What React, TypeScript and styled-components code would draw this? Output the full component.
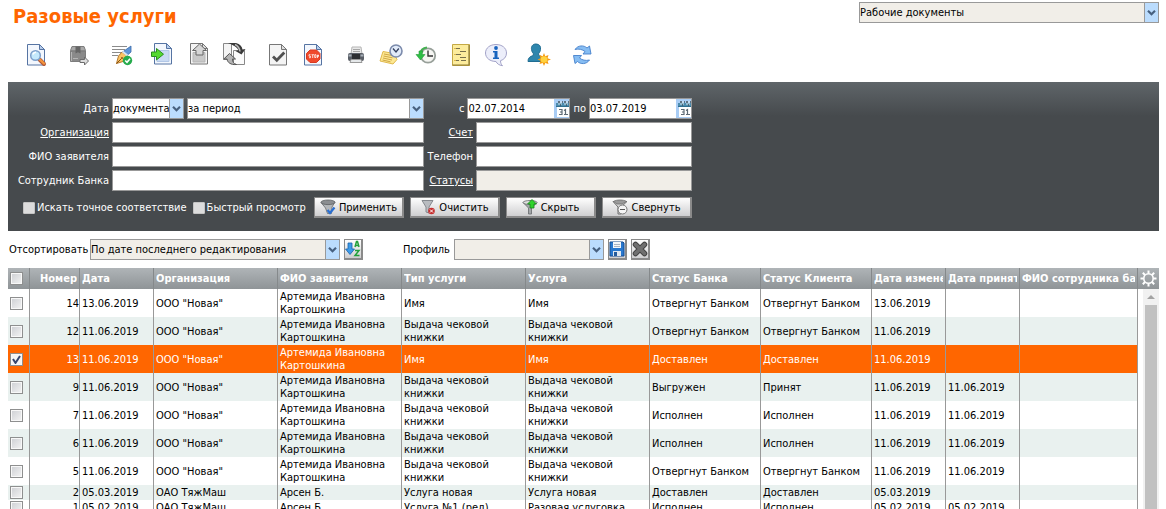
import React, { useState } from 'react';
import styled, { createGlobalStyle, css } from 'styled-components';

const FONT = '"DejaVu Sans Condensed", "DejaVu Sans", Tahoma, sans-serif';

const GlobalStyle = createGlobalStyle`
  *, *::before, *::after { box-sizing: border-box; }
  body { margin: 0; background: #fff; color: #000; font: 11px/13px ${FONT}; }
  button, input, select { font: inherit; color: inherit; margin: 0; padding: 0; }
`;

const Page = styled.div`
  display: flex;
  flex-direction: column;
  height: 100vh;
  overflow: hidden;
  padding: 2px 7px 0 8px;
`;

const Header = styled.header`
  display: flex;
  justify-content: space-between;
  align-items: flex-start;
  flex: none;
  min-height: 41px;
`;

const Title = styled.h1`
  margin: 2px 0 0 5px;
  font-size: 20px;
  line-height: 24px;
  font-weight: bold;
  color: #f60;
`;

/* ---------- form controls ---------- */

const SelectBox = styled.span<{ $width: number; $tinted?: boolean }>`
  display: inline-flex;
  flex: none;
  width: ${p => p.$width}px;
  height: 21px;
  border: 1px solid #999;
  background: ${p => (p.$tinted ? '#f1eee8' : '#fff')};
  color: #000;
`;

const NativeSelect = styled.select`
  appearance: none;
  flex: 1;
  min-width: 0;
  border: 0;
  background: transparent;
  border-radius: 0;
  outline: 0;
`;

const SelectArrow = styled.span`
  display: flex;
  align-items: center;
  justify-content: center;
  flex: none;
  width: 14px;
  border-left: 1px solid #999;
  background: #bbdcfd;
  pointer-events: none;
`;

function Select(props: { label: string; value: string; width: number; tinted?: boolean; id?: string }) {
  return (
    <SelectBox $width={props.width} $tinted={props.tinted}>
      <NativeSelect id={props.id} aria-label={props.label} defaultValue={props.value}>
        <option>{props.value}</option>
      </NativeSelect>
      <SelectArrow>
        <svg width="9" height="6" viewBox="0 0 9 6">
          <path d="M1 .8 4.500 4.200 8 .8" fill="none" stroke="#47607f" strokeWidth="2.200" />
        </svg>
      </SelectArrow>
    </SelectBox>
  );
}

const TextInput = styled.input<{ $tinted?: boolean }>`
  width: 100%;
  min-width: 0;
  height: 21px;
  border: 1px solid #999;
  border-radius: 0;
  padding: 0 1px;
  background: ${p => (p.$tinted ? '#f1eee8' : '#fff')};
  color: #000;
  outline: 0;
`;

const DateBox = styled.span`
  display: flex;
  flex: none;
  width: 103px;
  height: 21px;
  border: 1px solid #999;
  background: #fff;
`;

const DateInput = styled.input`
  flex: 1;
  min-width: 0;
  border: 0;
  background: transparent;
  color: #000;
  outline: 0;
`;

const CalendarButton = styled.button`
  display: flex;
  width: 15px;
  border: 0;
  background: #a9cdf5;
`;

function DateField({ id, value }: { id: string; value: string }) {
  return (
    <DateBox>
      <DateInput id={id} type="text" defaultValue={value} />
      <CalendarButton type="button" aria-label="Календарь">
        <svg width="15" height="19" viewBox="0 0 15 19">
          <path d="M2 4h13v4H2z" fill="#4c8cae" />
          <path d="M3 8h12v10H3z" fill="#fff" />
          <path d="M2 7.500h13" stroke="#2f6f8f" />
          <path d="M5 2v4M7 2v4M11 2v4M13 2v4" stroke="#d9e6ed" />
          <path d="M4 3h2M8 3h1M10 3h2M14 3h1M6 6h1M12 6h1" stroke="#40525e" strokeWidth="1.500" />
          <path d="M5 10.500h3v5H5M6 13h2M10 11.500l1.500-1V16M10 15.500h4" fill="none" stroke="#5d6a74" strokeWidth="1.200" />
        </svg>
      </CalendarButton>
    </DateBox>
  );
}

/* ---------- toolbar ---------- */

const Toolbar = styled.nav`
  display: flex;
  flex: none;
  gap: 19px;
  padding-left: 16px;
  margin-bottom: 15px;
`;

const ToolGroup = styled.div`
  display: flex;
  gap: 11px;
`;

const ToolButton = styled.button`
  width: 24px;
  height: 24px;
  border: 0;
  background: none;
  cursor: pointer;
  svg { display: block; }
`;

function Sheet({ x = 3, y = 1, stroke = '#5674a3', fill = '#f3f7fd', fold = '#b7cdec', w = 18 }) {
  return (
    <>
      <path d={`M${x + 0.5} ${y + 0.5}h${w - 6}l5 5v15.500h-${w - 1}z`} fill={fill} stroke={stroke} />
      <path d={`M${x + w - 5.5} ${y + 0.5}v5h5z`} fill={fold} stroke={stroke} />
    </>
  );
}

const toolIcons: Record<string, React.ReactNode> = {
  'Просмотр': (
    <>
      <Sheet />
      <path d="M15.500 16.500 20 21" stroke="#b0583a" strokeWidth="4" strokeLinecap="round" />
      <path d="M15.800 16.500 20 20.500" stroke="#f5953a" strokeWidth="2.400" strokeLinecap="round" />
      <circle cx="11.500" cy="12.500" r="4.800" fill="#c4e9fc" stroke="#7d9fca" strokeWidth="1.500" />
      <path d="M8.800 11.500q1-2.300 3.200-2.200" stroke="#fff" strokeWidth="1.500" fill="none" />
    </>
  ),
  'Отправить': (
    <>
      <path d="M3.500 7.500 5 3.500h12l1.500 4v11h-15z" fill="#8a8a8a" stroke="#7d7d7d" />
      <path d="M5.500 4h11L18 7.500H4z" fill="#a9a9a9" />
      <path d="M4 8h14" stroke="#777" />
      <path d="M8.500 3.500h5v7l-2.500-1.200-2.500 1.200z" fill="#666" />
      <path d="M4.500 9v9M6 15.500h5" stroke="#b5b5b5" />
      <path d="M13 16.500h4.500v-2.500l4 4-4 4v-2.500H13z" fill="#ddd" stroke="#6c6c6c" />
    </>
  ),
  'Подписать': (
    <>
      <path d="M2 3.500h15M2 6.500h13M2 9.500h10M2 12.500h6" stroke="#8b8b8b" strokeWidth="1.200" />
      <path d="M21 3v6l-4 3.500-4.500-3.500z" fill="#5f95d8" stroke="#3a69a8" strokeWidth=".8" />
      <path d="M12 9l5 3.500-2.500 5.500L6.500 20.500 8.500 13z" fill="#fbc363" stroke="#b5782b" />
      <path d="m6.500 20.500 5-5" stroke="#815016" />
      <circle cx="12" cy="15" r="1" fill="#8c5a1c" />
      <path d="M12.500 8.500l5 4" stroke="#d8e3ef" strokeWidth="2" />
      <circle cx="17.500" cy="17.500" r="4.700" fill="#26ab4c" />
      <path d="m15.200 17.500 1.800 1.800 3-3.500" stroke="#fff" strokeWidth="1.600" fill="none" />
    </>
  ),
  'Импорт': (
    <>
      <Sheet x={1} y={0} />
      <path d="M4 7.500h12v11H4z" fill="#c9daf2" stroke="#b2c7e6" />
      <path d="M-1.500 9h5V5.500l7 5.700-7 5.700V13.500h-5z" fill="#55d930" stroke="#2b8f1f" />
    </>
  ),
  'Экспорт': (
    <>
      <Sheet x={2} y={0} stroke="#777" fill="#f4f4f4" fold="#ddd" />
      <path d="M5 9.500h12v9.500H5z" fill="#c8c8c8" stroke="#b5b5b5" />
      <path d="m11.500 1 7 6.500H15V12H8V7.500H4.500z" fill="#d6d6d6" stroke="#666" />
    </>
  ),
  'Обмен': (
    <>
      <path d="M.5.500h8v16h-8z" fill="#f4f4f4" stroke="#888" />
      <path d="M10.500 7.500h11v14h-11z" fill="#fbfbfb" stroke="#888" />
      <path d="M5 0h8c4 1 6 3.500 6.500 6.500l3-.5-4 5.500-6-3.500 3-.7C14.500 4.500 10 2 5 0z" fill="#3a3a3a" />
      <path d="M12 1.500c3 1.500 4.500 4 5 7" stroke="#bbb" strokeWidth="1.500" fill="none" />
      <path d="m6.500 10.500 6 5.500H9.500c0 3 1 4.500 4 5.500-6 .5-9-2-9.500-5.500H.8z" fill="#b4b4b4" stroke="#555" />
    </>
  ),
  'Проверить': (
    <>
      <Sheet stroke="#777" fill="#f4f4f4" fold="#ddd" />
      <path d="m7 13.500 3.800 3.800 7.500-7.800" stroke="#505050" strokeWidth="2.800" fill="none" />
    </>
  ),
  'Остановить': (
    <>
      <Sheet />
      <path d="M9 7h6.500L19 10.500V16l-3.500 3.500H9L5.500 16v-5.500z" fill="#f04a2c" stroke="#d93a22" />
      <path d="M9.500 11.700H8v1.500h1.500v1.500H8M10.500 11.700h2.500M11.700 12v3M13.700 11.700h1.300v2.800h-1.300zM16.500 15v-3h1v1.500h-1" stroke="#fff" strokeWidth=".8" fill="none" />
    </>
  ),
  'Печать': (
    <>
      <path d="M8 4h9l1 7H7z" fill="#e8e8e8" stroke="#b5b5b5" />
      <path d="M9 6.500h7M9 8.500h7" stroke="#a5a5a5" />
      <rect x="4" y="10" width="16" height="8" rx="2" fill="#595e66" />
      <path d="M4.500 12.500h3M16.500 12.500h3" stroke="#a8afb8" strokeWidth="2" />
      <path d="M8 11h8v5H8z" fill="#2c2e31" />
      <path d="M7 16.500h10l1 3H6z" fill="#e5e8ea" stroke="#999" />
    </>
  ),
  'Напоминание': (
    <>
      <path d="m4 8.500 11 2 3 6-4 4.500-13-3z" fill="#fde892" stroke="#e0b94e" />
      <path d="m5 11 9 1.700M4.500 13l9 1.800M4 15l9 2M3.500 17l8 1.800" stroke="#cfa748" />
      <circle cx="17" cy="8" r="6" fill="#e2ebf9" stroke="#7c8bac" strokeWidth="1.600" />
      <path d="m14 5.500 3 3.500 2.800-3.500" stroke="#34405f" strokeWidth="1.300" fill="none" />
    </>
  ),
  'История': (
    <>
      <circle cx="14" cy="12.500" r="7.200" fill="#f6f6f3" stroke="#98a09a" strokeWidth="1.800" />
      <path d="M14 7.500v5.500h5" stroke="#333" strokeWidth="1.400" fill="none" />
      <path d="M6 11c.5-3.500 3-6 7-6.500" stroke="#45b052" strokeWidth="2" fill="none" />
      <path d="M5 8v3.500H2L6.500 17l4.500-5.500H8L9 8z" fill="#2fbf45" stroke="#289a3a" strokeWidth=".6" />
    </>
  ),
  'Документ': (
    <>
      <path d="M3.500 1.500h17v21h-17z" fill="#fcec9c" stroke="#c4a945" />
      <path d="M20 2v20.500M3.500 22h17" stroke="#8c7a35" strokeWidth="1.200" />
      <path d="M7 5.500h4M11 8.500h6M7 11.500h5M11 14.500h6M7 17.500h3M12 17.500h5" stroke="#77704c" strokeWidth="1.200" />
      <path d="M5 5.500h2M5 11.500h2M5 17.500h2" stroke="#dcb64a" strokeWidth="1.200" />
    </>
  ),
  'Информация': (
    <>
      <path d="M12 1.500c6 0 10.500 3.500 10.500 8.500 0 4-2.500 6.500-6 7.700 0 2 .5 3.500 2 5-3.500-.5-5.500-2-6.500-4.200-6 0-10.500-3.500-10.500-8.500S6 1.500 12 1.500z" fill="#eceefa" stroke="#a3a3c8" />
      <circle cx="12" cy="5" r="1.900" fill="#1763be" />
      <path d="M9 8h4.500v6.500H15V16H9v-1.500h1.500v-5H9z" fill="#1763be" />
    </>
  ),
  'Клиент': (
    <>
      <path d="M9 1c3.500 0 5 2.500 4.500 5.500-.3 2-1 3-1.800 4v2c3.500 1 5.300 2.500 5.300 6H1c0-3.500 1.800-5 5.300-6v-2C5.500 9.500 4.800 8.500 4.500 6.500 4 3.500 5.500 1 9 1z" fill="#2e86ad" stroke="#206d92" />
      <path d="m17 10 1.300 3.200L21.500 12l-1 3.200 3.500 1.300-3.500 1.300 1 3.200-3.200-1L17 23l-1.300-3-3.200 1 1-3.200-3-1.300 3-1.300-1-3.200 3.200 1.200z" fill="#f59b14" />
      <circle cx="17" cy="16.500" r="3.300" fill="#ffd23e" />
    </>
  ),
  'Обновить': (
    <>
      <path d="M5 6.500C8 2 14 2 17 5l2.500-2 1.500 8h-8l2-2.500C12.500 6.500 9 5.500 5 6.500z" fill="#86bdf3" stroke="#4580cb" strokeWidth=".9" />
      <path d="M19.500 17C16.500 21.500 10.500 21.500 7.500 18.500L5 20.500 3.500 12.500h8l-2 2.500c2.500 2 6 3 10 2z" fill="#86bdf3" stroke="#4580cb" strokeWidth=".9" />
    </>
  ),
};

const toolGroups = [
  ['Просмотр'],
  ['Отправить'],
  ['Подписать'],
  ['Импорт', 'Экспорт', 'Обмен'],
  ['Проверить', 'Остановить'],
  ['Печать', 'Напоминание', 'История', 'Документ', 'Информация'],
  ['Клиент'],
  ['Обновить'],
];

/* ---------- filter panel ---------- */

const FilterPanel = styled.form`
  flex: none;
  padding: 16px 0 13px;
  background: linear-gradient(#5f6569, #464a4d 34px);
  color: #fff;
`;

const FilterGrid = styled.div`
  display: grid;
  grid-template-columns: 101px 312px 46px 216px;
  gap: 3px;
  width: max-content;
`;

const labelStyle = css`
  align-self: center;
  justify-self: end;
  color: #fff;
  white-space: nowrap;
`;

const FieldLabel = styled.label`${labelStyle}`;
const FieldLink = styled.a`${labelStyle} text-decoration: underline;`;

const FieldGroup = styled.div`
  display: flex;
  gap: 3px;
`;

const DateRange = styled.div`
  grid-column: span 2;
  display: flex;
  justify-content: flex-end;
  align-items: center;
  gap: 3px;
`;

const ActionRow = styled.div`
  grid-column: 1 / -1;
  display: flex;
  align-items: center;
  margin-top: 3px;
  padding-left: 15px;
  gap: 6px;
`;

const CheckLabel = styled.label`
  display: flex;
  align-items: center;
  gap: 2px;
  white-space: nowrap;
`;

const FilterCheck = styled.input`
  appearance: none;
  width: 12px;
  height: 12px;
  border: 1px solid #c4c4c4;
  border-radius: 1px;
  background: #dcdcdc;
`;

const ActionButtons = styled.div`
  display: flex;
  gap: 6px;
  margin-left: auto;
`;

const ActionButton = styled.button`
  display: flex;
  align-items: center;
  justify-content: center;
  gap: 3px;
  width: 90px;
  height: 21px;
  border: 1px solid #8a8a8a;
  border-right-width: 2px;
  border-bottom-width: 2px;
  background: linear-gradient(#fefefe, #cfcfd1);
  color: #000;
  white-space: nowrap;
  svg { flex: none; }
`;

function Funnel() {
  return (
    <>
      <path d="M1 3.500 6.500 9v6h3V9L15 3.500z" fill="#a4a7aa" stroke="#66696c" strokeWidth=".8" />
      <ellipse cx="8" cy="3.500" rx="7" ry="2" fill="#dedede" stroke="#66696c" strokeWidth=".8" />
    </>
  );
}

const actions: { text: string; icon: React.ReactNode }[] = [
  {
    text: 'Применить',
    icon: (
      <>
        <path d="M1 3.500 5.500 9l2 5.500h4L12 8l3-5z" fill="#b4b7ba" stroke="#66696c" strokeWidth=".8" />
        <ellipse cx="8" cy="3.300" rx="7" ry="2.300" fill="#8b8e91" stroke="#5c5f62" strokeWidth=".8" />
        <path d="m7.500 11 2.500 3 4.500-5.500" stroke="#2a6fd2" strokeWidth="2.200" fill="none" />
      </>
    ),
  },
  {
    text: 'Очистить',
    icon: (
      <>
        <path d="M2 1.500h11L9 8v6l-3-1V8z" fill="#b9bcc0" stroke="#85898e" />
        <circle cx="11.500" cy="12" r="3.300" fill="#c62f2f" />
        <path d="m10 10.500 3 3m0-3-3 3" stroke="#fff" />
      </>
    ),
  },
  {
    text: 'Скрыть',
    icon: (
      <>
        <Funnel />
        <path d="m10 .5 4.500 4.500H12v4H8V5H5.500z" fill="#2fd32c" stroke="#16831b" strokeWidth=".8" />
      </>
    ),
  },
  {
    text: 'Свернуть',
    icon: (
      <>
        <path d="M1 2.500 6 8v7h3V8l6-5.500z" fill="#d7d7d7" stroke="#707070" />
        <path d="M1.500 2.500C4 .5 12 .5 14.500 2.500L10 5H5z" fill="#9b9b9b" stroke="#707070" strokeWidth=".8" />
        <circle cx="10.500" cy="10.500" r="4.500" fill="#f4f4f4" stroke="#777" />
        <path d="M8 10.500h5" stroke="#555" />
      </>
    ),
  },
];

/* ---------- sort bar ---------- */

const SortBar = styled.div`
  display: flex;
  flex: none;
  align-items: center;
  gap: 4px;
  padding: 8px 0;
`;

const SortLabel = styled.label<{ $width: number }>`
  width: ${p => p.$width}px;
  padding-left: 1px;
  white-space: nowrap;
`;

const ProfileLabel = styled(SortLabel)`
  margin-left: 35px;
`;

const IconButton = styled.button`
  display: flex;
  align-items: center;
  justify-content: center;
  width: 19px;
  height: 21px;
  border: 1px solid #8a8a8a;
  border-right-width: 2px;
  border-bottom-width: 2px;
  background: linear-gradient(#fefefe, #cfcfd1);
  svg { flex: none; }
`;

/* ---------- documents table ---------- */

const Grid = styled.div`
  display: flex;
  flex: 1;
  min-height: 0;
  align-items: stretch;
`;

const TableArea = styled.div`
  flex: 1;
  min-width: 0;
  overflow: hidden;
`;

const Table = styled.table`
  width: 100%;
  table-layout: fixed;
  border-collapse: separate;
  border-spacing: 0;
`;

const headFill = 'linear-gradient(#afb4b7, #8f9497)';

const Th = styled.th<{ $right?: boolean }>`
  height: 21px;
  padding: 0 2px;
  border-right: 1px solid #85898b;
  background: ${headFill};
  color: #fff;
  font-weight: bold;
  text-align: ${p => (p.$right ? 'right' : 'left')};
`;

const HeadText = styled.div`
  overflow: hidden;
  white-space: nowrap;
`;

const Td = styled.td<{ $right?: boolean }>`
  padding: 1px ${p => (p.$right ? 0 : 2)}px 1px 2px;
  border-right: 1px solid #999;
  text-align: ${p => (p.$right ? 'right' : 'left')};
  vertical-align: middle;
`;

const Row = styled.tr<{ $selected: boolean }>`
  background: #fff;
  &:nth-child(even) { background: #e9f1ef; }
  ${p => p.$selected && css`
    && { background: #f60; color: #fff; }
  `}
`;

const RowCheck = styled.input`
  appearance: none;
  display: block;
  width: 13px;
  height: 13px;
  border: 1px solid #8e8f8f;
  background: linear-gradient(135deg, #cdcfd3, #f4f4f4);
  box-shadow: inset 0 0 0 1px #f8f8f8;
  &:checked {
    background: #f4f4f4 url("data:image/svg+xml,%3Csvg xmlns='http://www.w3.org/2000/svg' viewBox='0 0 11 11'%3E%3Cpath d='M2 5l2.500 4L9 2' fill='none' stroke='%2335456e' stroke-width='2'/%3E%3C/svg%3E") center / 11px 11px no-repeat;
  }
`;

const SideRail = styled.div`
  display: flex;
  flex-direction: column;
  width: 21px;
`;

const SettingsButton = styled.button`
  display: flex;
  align-items: center;
  justify-content: center;
  flex: none;
  height: 21px;
  border: 0;
  background: ${headFill};
`;

const ScrollTrack = styled.div`
  display: flex;
  flex-direction: column;
  align-items: center;
  flex: 1;
  width: 16px;
  margin-left: auto;
  background: #f1f1f1;
`;

const ScrollThumb = styled.div`
  flex: 1;
  width: 12px;
  background: #c1c1c1;
`;

const ScrollUp = styled.svg`
  flex: none;
  margin: 4px 0;
`;

const columns: { title: string; width?: number; right?: boolean }[] = [
  { title: 'Номер', width: 50, right: true },
  { title: 'Дата', width: 74 },
  { title: 'Организация', width: 124 },
  { title: 'ФИО заявителя', width: 124 },
  { title: 'Тип услуги', width: 124 },
  { title: 'Услуга', width: 124 },
  { title: 'Статус Банка', width: 111 },
  { title: 'Статус Клиента', width: 111 },
  { title: 'Дата изменения', width: 74 },
  { title: 'Дата принятия', width: 74 },
  { title: 'ФИО сотрудника банка' },
];

const person = 'Артемида Ивановна Картошкина';
const book = 'Выдача чековой книжки';
const org = 'ООО "Новая"';

const rows: string[][] = [
  ['14', '13.06.2019', org, person, 'Имя', 'Имя', 'Отвергнут Банком', 'Отвергнут Банком', '13.06.2019', '', ''],
  ['12', '11.06.2019', org, person, book, book, 'Отвергнут Банком', 'Отвергнут Банком', '11.06.2019', '', ''],
  ['13', '11.06.2019', org, person, 'Имя', 'Имя', 'Доставлен', 'Доставлен', '11.06.2019', '', ''],
  ['9', '11.06.2019', org, person, book, book, 'Выгружен', 'Принят', '11.06.2019', '11.06.2019', ''],
  ['7', '11.06.2019', org, person, book, book, 'Исполнен', 'Исполнен', '11.06.2019', '11.06.2019', ''],
  ['6', '11.06.2019', org, person, book, book, 'Исполнен', 'Исполнен', '11.06.2019', '11.06.2019', ''],
  ['5', '11.06.2019', org, person, book, book, 'Отвергнут Банком', 'Отвергнут Банком', '11.06.2019', '11.06.2019', ''],
  ['2', '05.03.2019', 'ОАО ТяжМаш', 'Арсен Б.', 'Услуга новая', 'Услуга новая', 'Доставлен', 'Доставлен', '05.03.2019', '', ''],
  ['1', '05.02.2019', 'ОАО ТяжМаш', 'Арсен Б.', 'Услуга №1 (ред)', 'Разовая услуговка', 'Исполнен', 'Исполнен', '05.02.2019', '05.02.2019', ''],
];

export default function App() {
  const [selected, setSelected] = useState<string[]>(['13']);
  const toggle = (id: string) =>
    setSelected(s => (s.includes(id) ? s.filter(x => x !== id) : [...s, id]));

  return (
    <Page>
      <GlobalStyle />
      <Header>
        <Title>Разовые услуги</Title>
        <Select label="Раздел" value="Рабочие документы" width={300} tinted />
      </Header>

      <Toolbar>
        {toolGroups.map(group => (
          <ToolGroup key={group[0]}>
            {group.map(name => (
              <ToolButton key={name} type="button" aria-label={name}>
                <svg width="24" height="24" viewBox="0 0 24 24" overflow="visible">{toolIcons[name]}</svg>
              </ToolButton>
            ))}
          </ToolGroup>
        ))}
      </Toolbar>

      <FilterPanel onSubmit={e => e.preventDefault()}>
        <FilterGrid>
          <FieldLabel htmlFor="dateKind">Дата</FieldLabel>
          <FieldGroup>
            <Select id="dateKind" label="Дата" value="документа" width={72} />
            <Select label="Период" value="за период" width={237} />
          </FieldGroup>
          <DateRange>
            <label htmlFor="from">с</label>
            <DateField id="from" value="02.07.2014" />
            <label htmlFor="to">по</label>
            <DateField id="to" value="03.07.2019" />
          </DateRange>

          <FieldLink href="#org" id="orgLabel">Организация</FieldLink>
          <TextInput type="text" aria-labelledby="orgLabel" />
          <FieldLink href="#account" id="accountLabel">Счет</FieldLink>
          <TextInput type="text" aria-labelledby="accountLabel" />

          <FieldLabel htmlFor="applicant">ФИО заявителя</FieldLabel>
          <TextInput type="text" id="applicant" />
          <FieldLabel htmlFor="phone">Телефон</FieldLabel>
          <TextInput type="text" id="phone" />

          <FieldLabel htmlFor="employee">Сотрудник Банка</FieldLabel>
          <TextInput type="text" id="employee" />
          <FieldLink href="#statuses" id="statusLabel">Статусы</FieldLink>
          <TextInput type="text" aria-labelledby="statusLabel" readOnly $tinted />

          <ActionRow>
            <CheckLabel><FilterCheck type="checkbox" />Искать точное соответствие</CheckLabel>
            <CheckLabel><FilterCheck type="checkbox" />Быстрый просмотр</CheckLabel>
            <ActionButtons>
              {actions.map(a => (
                <ActionButton key={a.text} type="button">
                  <svg width="16" height="16" viewBox="0 0 16 16">{a.icon}</svg>
                  {a.text}
                </ActionButton>
              ))}
            </ActionButtons>
          </ActionRow>
        </FilterGrid>
      </FilterPanel>

      <SortBar>
        <SortLabel htmlFor="sort" $width={78}>Отсортировать</SortLabel>
        <Select id="sort" label="Отсортировать" value="По дате последнего редактирования" width={250} tinted />
        <IconButton type="button" aria-label="Направление сортировки">
          <svg width="16" height="18" viewBox="0 0 16 18">
            <path d="M3 3h4v6h2.500L5 14.500.5 9H3z" fill="#3d9be8" stroke="#1b62ad" strokeWidth=".8" />
            <path d="m10 7 1.500-5.500h1L14 7M10.500 5.500h3M10 10.500h4l-4 5h4.500" fill="none" stroke="#22a03b" strokeWidth="1.500" />
          </svg>
        </IconButton>
        <ProfileLabel htmlFor="profile" $width={48}>Профиль</ProfileLabel>
        <Select id="profile" label="Профиль" value="" width={150} tinted />
        <IconButton type="button" aria-label="Сохранить">
          <svg width="16" height="16" viewBox="0 0 16 16">
            <path d="M1 1h13l1 1v13H1z" fill="#2878cf" stroke="#174d91" />
            <path d="M4 1h8v6H4z" fill="#f3f6fa" />
            <path d="M5 3.500h6M5 5.500h6" stroke="#a9b4c2" />
            <path d="M4 10h8v5H4z" fill="#dfe7f0" />
            <path d="M5 11h3v4H5z" fill="#245a9b" />
          </svg>
        </IconButton>
        <IconButton type="button" aria-label="Удалить">
          <svg width="16" height="16" viewBox="0 0 16 16">
            <path d="m3.500 3.500 9 9M12.500 3.500l-9 9" stroke="#444" strokeWidth="5.500" strokeLinecap="round" />
            <path d="m3.500 3.500 9 9M12.500 3.500l-9 9" stroke="#707070" strokeWidth="3.500" strokeLinecap="round" />
          </svg>
        </IconButton>
      </SortBar>

      <Grid>
        <TableArea>
          <Table>
            <colgroup>
              <col width="22" />
              {columns.map(c => <col key={c.title} width={c.width} />)}
            </colgroup>
            <thead>
              <tr>
                <Th><RowCheck type="checkbox" aria-label="Выбрать все" /></Th>
                {columns.map(c => (
                  <Th key={c.title} $right={c.right}><HeadText>{c.title}</HeadText></Th>
                ))}
              </tr>
            </thead>
            <tbody>
              {rows.map(r => (
                <Row key={r[0]} $selected={selected.includes(r[0])}>
                  <Td>
                    <RowCheck
                      type="checkbox"
                      aria-label={`Документ ${r[0]}`}
                      checked={selected.includes(r[0])}
                      onChange={() => toggle(r[0])}
                    />
                  </Td>
                  {r.map((text, i) => <Td key={i} $right={columns[i].right}>{text}</Td>)}
                </Row>
              ))}
            </tbody>
          </Table>
        </TableArea>
        <SideRail>
          <SettingsButton type="button" aria-label="Настройка столбцов">
            <svg width="17" height="17" viewBox="0 0 17 17" fill="none" stroke="#fff">
              <circle cx="8.500" cy="8.500" r="4.700" strokeWidth="1.600" />
              <path d="M8.500.5v3M8.500 13.500v3M.5 8.500h3M13.500 8.500h3M2.800 2.800 5 5M12 12l2.200 2.200M14.200 2.800 12 5M5 12l-2.200 2.200" strokeWidth="2" />
            </svg>
          </SettingsButton>
          <ScrollTrack>
            <ScrollUp width="8" height="8" viewBox="0 0 8 8">
              <path d="M0 6 4 2l4 4z" fill="#a3a3a3" />
            </ScrollUp>
            <ScrollThumb />
          </ScrollTrack>
        </SideRail>
      </Grid>
    </Page>
  );
}
